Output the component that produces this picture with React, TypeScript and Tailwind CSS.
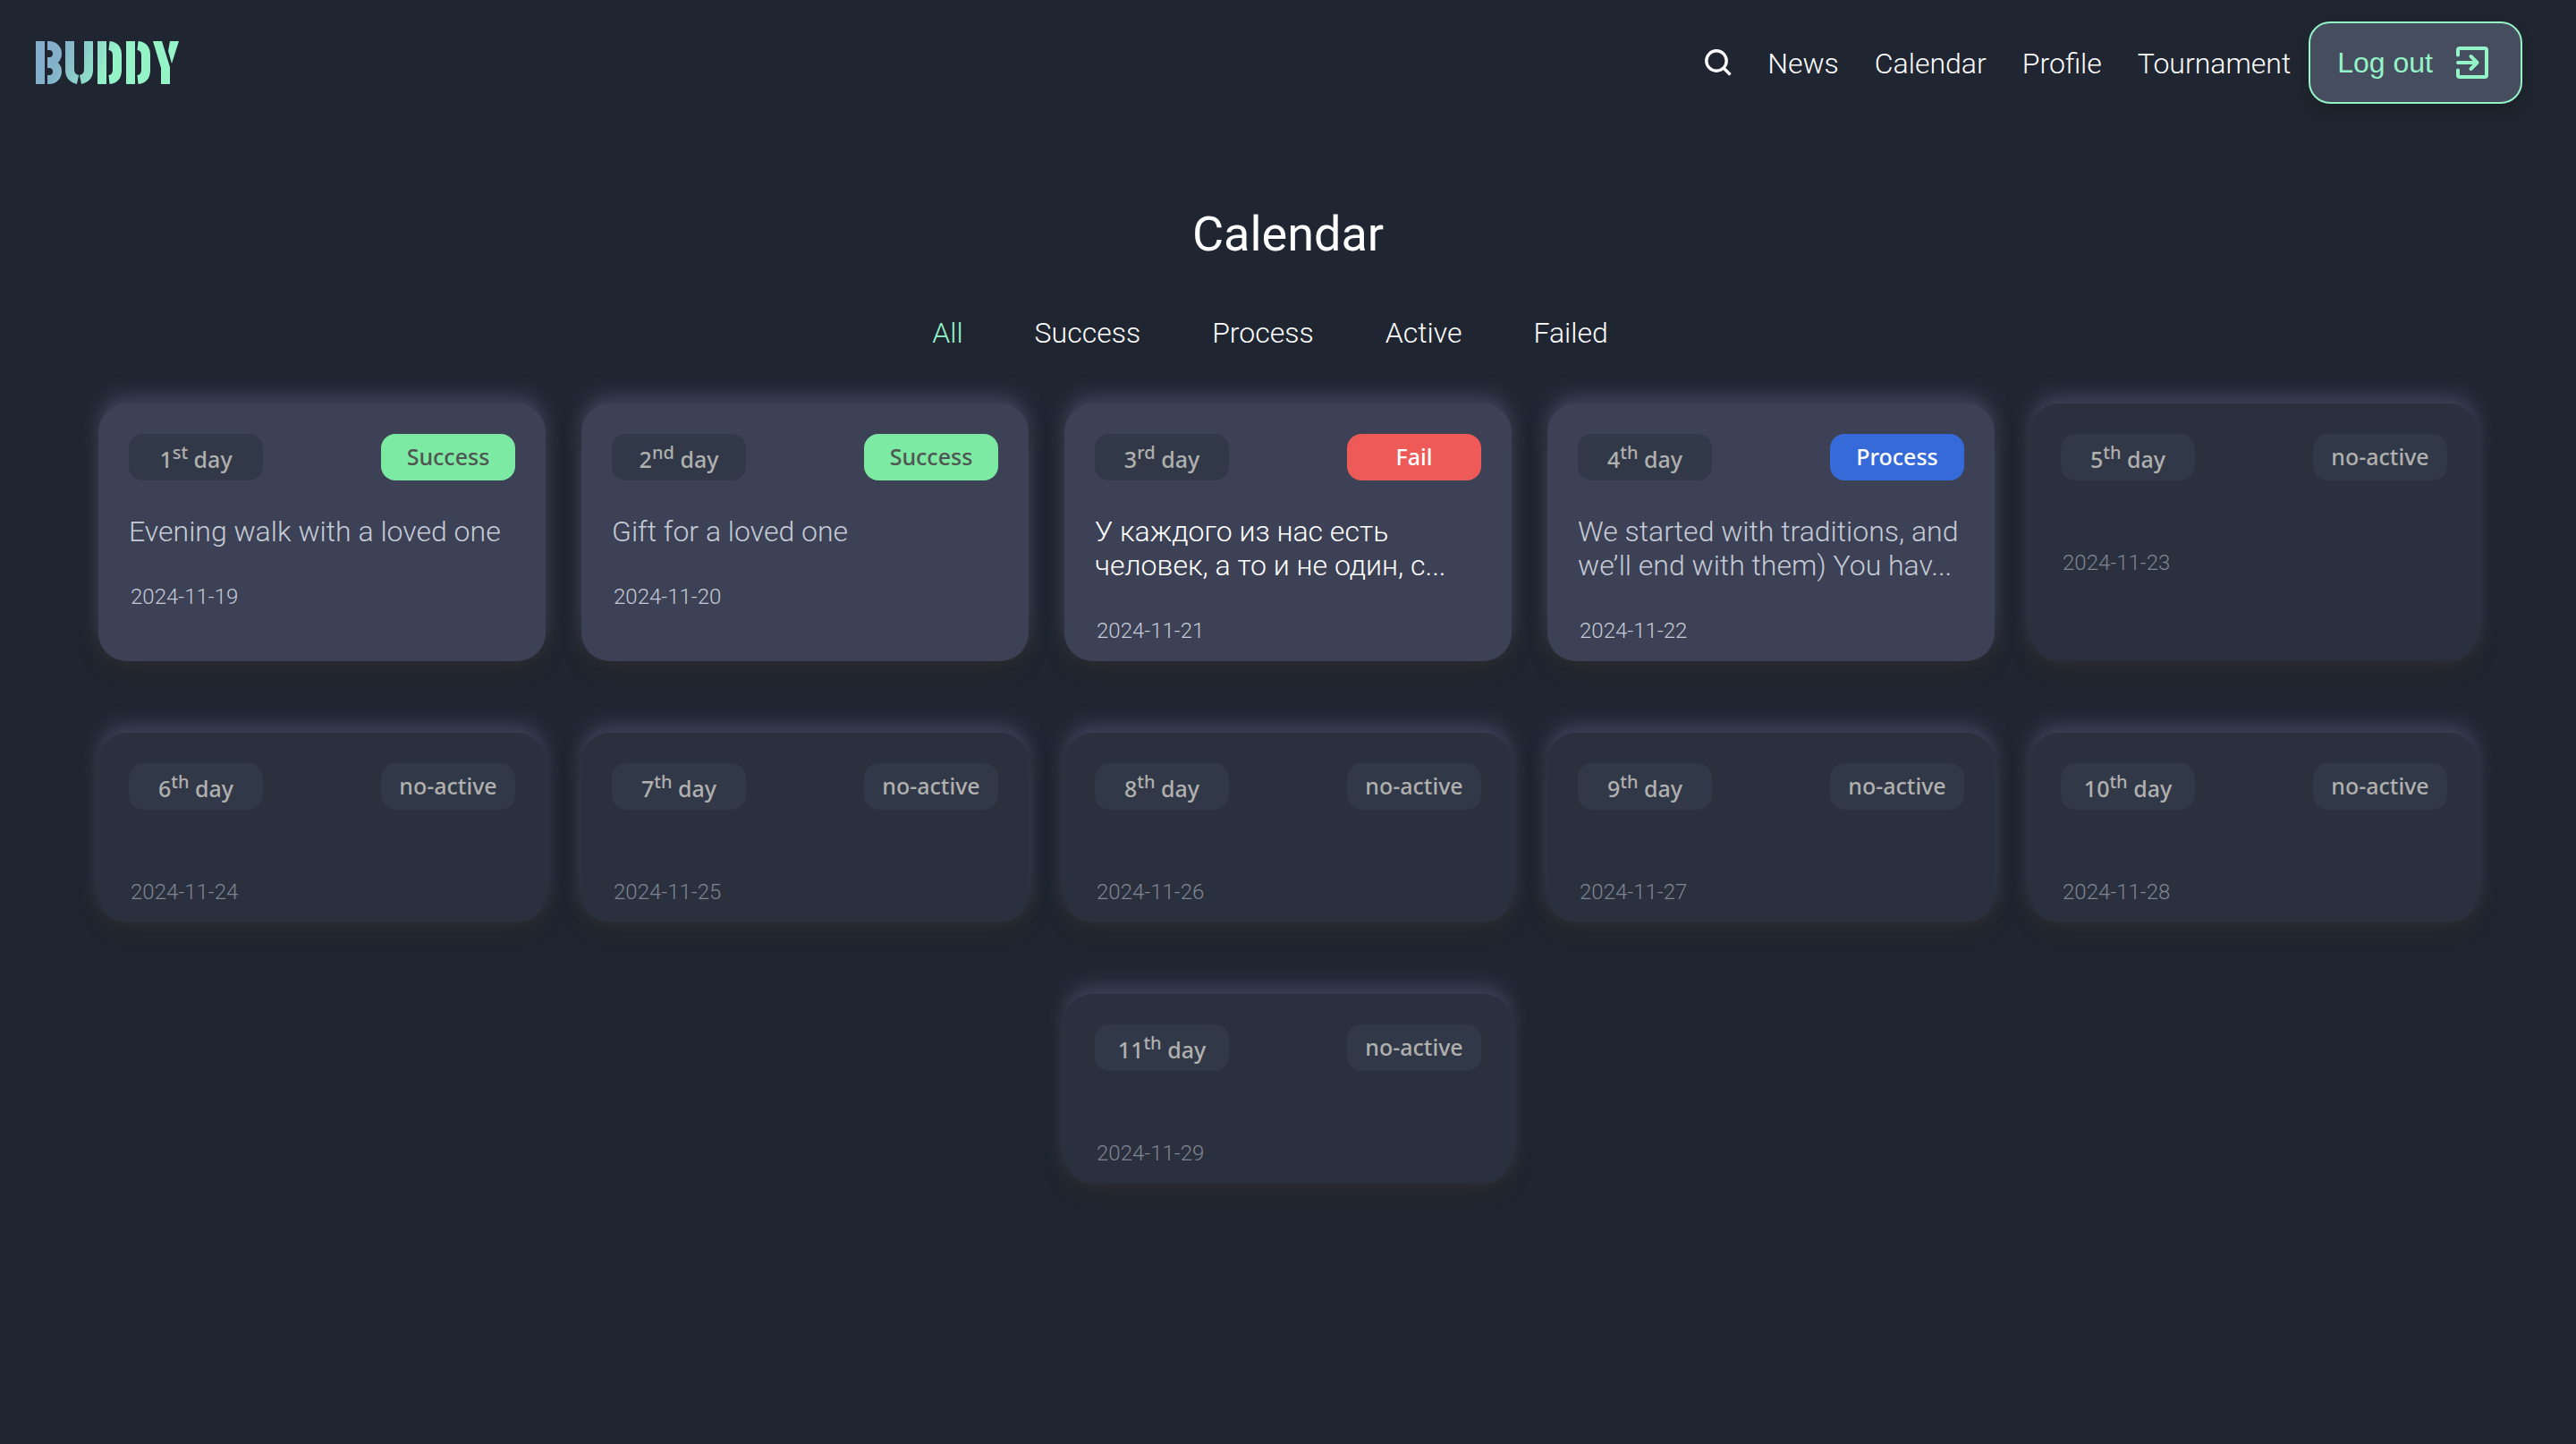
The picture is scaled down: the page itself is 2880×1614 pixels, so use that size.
import React from "react";

type Status = "Success" | "Fail" | "Process" | "no-active";

interface Day {
  n: number;
  suffix: string;
  status: Status;
  text?: string;
  bright?: boolean;
  date: string;
}

const days: Day[] = [
  { n: 1, suffix: "st", status: "Success", text: "Evening walk with a loved one", date: "2024-11-19" },
  { n: 2, suffix: "nd", status: "Success", text: "Gift for a loved one", date: "2024-11-20" },
  { n: 3, suffix: "rd", status: "Fail", text: "У каждого из нас есть человек, а то и не один, с...", bright: true, date: "2024-11-21" },
  { n: 4, suffix: "th", status: "Process", text: "We started with traditions, and we’ll end with them) You hav...", date: "2024-11-22" },
  { n: 5, suffix: "th", status: "no-active", date: "2024-11-23" },
  { n: 6, suffix: "th", status: "no-active", date: "2024-11-24" },
  { n: 7, suffix: "th", status: "no-active", date: "2024-11-25" },
  { n: 8, suffix: "th", status: "no-active", date: "2024-11-26" },
  { n: 9, suffix: "th", status: "no-active", date: "2024-11-27" },
  { n: 10, suffix: "th", status: "no-active", date: "2024-11-28" },
  { n: 11, suffix: "th", status: "no-active", date: "2024-11-29" },
];

const statusStyle: Record<Status, string> = {
  Success: "bg-[#7ceaa2] text-[#4f5552]",
  Fail: "bg-[#ed5a58] text-white",
  Process: "bg-[#376ad9] text-white",
  "no-active": "bg-[#313848] text-[#b0b0ae]",
};

const filters = ["All", "Success", "Process", "Active", "Failed"];
const links = ["News", "Calendar", "Profile", "Tournament"];

function Logo() {
  return (
    <svg viewBox="0 0 160 48" className="h-12 w-40" role="img" aria-label="Buddy">
      <defs>
        <linearGradient id="logo" gradientUnits="userSpaceOnUse" x1="12" y1="10" x2="78" y2="38">
          <stop offset="0" stopColor="#84aecb" />
          <stop offset="0.25" stopColor="#84b2ca" />
          <stop offset="1" stopColor="#95f3c8" />
        </linearGradient>
      </defs>
      <g fill="none" stroke="url(#logo)" strokeWidth="10">
        <path d="M5 0V48" />
        <path d="M13 5H15a9 9 0 0 1 0 18H13M13 25H15a9 9 0 0 1 0 18H13" />
        <path d="M38 0V32Q38 41 47 43M59 0V32Q59 41 50 43" />
        <path d="M74 0V48M82 5Q91 6 91 16V32Q91 42 82 43" />
        <path d="M106 0V48M114 5Q123 6 123 16V32Q123 42 114 43" />
      </g>
      <path fill="#95f3c8" d="M131 0H141L150 29V48H140V30ZM150 0H160L152 25L148 11Z" />
    </svg>
  );
}

function SearchIcon() {
  return (
    <svg viewBox="0 0 30 30" className="size-[30px]" fill="none" stroke="white" strokeWidth="3.4">
      <circle cx="13" cy="13" r="11.2" />
      <path d="M21 21L28.500 28.500" />
    </svg>
  );
}

function LogoutIcon() {
  return (
    <svg viewBox="-6 -6 48 48" className="size-12" fill="none" stroke="#95f3c8" strokeWidth="4" strokeLinecap="round">
      <path d="M2 9.500V4a2 2 0 0 1 2-2H32a2 2 0 0 1 2 2V32a2 2 0 0 1-2 2H4a2 2 0 0 1-2-2V26.500" />
      <path strokeLinejoin="round" d="M2 18H23M16.500 11L23.500 18L16.500 25" />
    </svg>
  );
}

function Card({ day }: { day: Day }) {
  const active = day.status !== "no-active";
  return (
    <li
      className={
        "flex w-[500px] flex-col rounded-[32px] px-[34px] pt-[34px] pb-5 shadow-[0_-10px_20px_#3c4158,0_8px_20px_#292929] " +
        (active ? "bg-[#3c4155]" : "bg-[#2a303e]")
      }
    >
      <div className="flex justify-between font-['Noto_Sans',sans-serif] text-[25px] font-medium">
        <span className="flex h-[52px] w-[150px] items-center justify-center rounded-2xl bg-[#313848] pt-1.5 text-[#b0b0ae]">
          <span>
            {day.n}
            <sup className="text-xl leading-none">{day.suffix}</sup> day
          </span>
        </span>
        <span className={"flex h-[52px] w-[150px] items-center justify-center rounded-2xl " + statusStyle[day.status]}>
          {day.status}
        </span>
      </div>
      {day.text && (
        <p className={"mt-[38px] text-[32px] leading-[38px] font-light " + (day.bright ? "text-white" : "text-[#c5cbd6]")}>
          {day.text}
        </p>
      )}
      <time
        dateTime={day.date}
        className={"px-0.5 text-2xl leading-7 font-light " + (active ? "mt-10 text-[#c5cbd6]" : "mt-[78px] text-[#7f8592]")}
      >
        {day.date}
      </time>
    </li>
  );
}

export default function App() {
  return (
    <div className="min-h-screen bg-[#202631] font-['Roboto',sans-serif] text-white">
      <header className="flex items-center justify-between px-10 py-6">
        <a href="#" aria-label="Buddy">
          <Logo />
        </a>
        <nav className="mr-5 flex items-center text-[32px] font-light">
          <button type="button" aria-label="Search" className="mr-10">
            <SearchIcon />
          </button>
          <ul className="mr-5 flex gap-10 pt-0.5">
            {links.map((l) => (
              <li key={l}>
                <a href="#">{l}</a>
              </li>
            ))}
          </ul>
          <button
            type="button"
            className="flex h-[92px] items-center gap-5 rounded-[24px] border-2 border-[#95f3c8] bg-[#464d5f] px-[30px] font-['Liberation_Sans',sans-serif] font-normal text-[#95f3c8] shadow-[0_8px_16px_#0003]"
          >
            Log out
            <LogoutIcon />
          </button>
        </nav>
      </header>

      <main className="pt-20">
        <h1 className="text-center text-[54px] leading-[84px] font-normal">Calendar</h1>
        <div className="mt-11 flex justify-center gap-20 pr-10 text-[32px] leading-[48px] font-light">
          {filters.map((f) => (
            <button key={f} type="button" className={f === "All" ? "text-[#95f3c8]" : ""}>
              {f}
            </button>
          ))}
        </div>
        <ul className="mt-[55px] flex flex-wrap justify-center gap-x-10 gap-y-20 px-20 pb-20">
          {days.map((d) => (
            <Card key={d.n} day={d} />
          ))}
        </ul>
      </main>
    </div>
  );
}
